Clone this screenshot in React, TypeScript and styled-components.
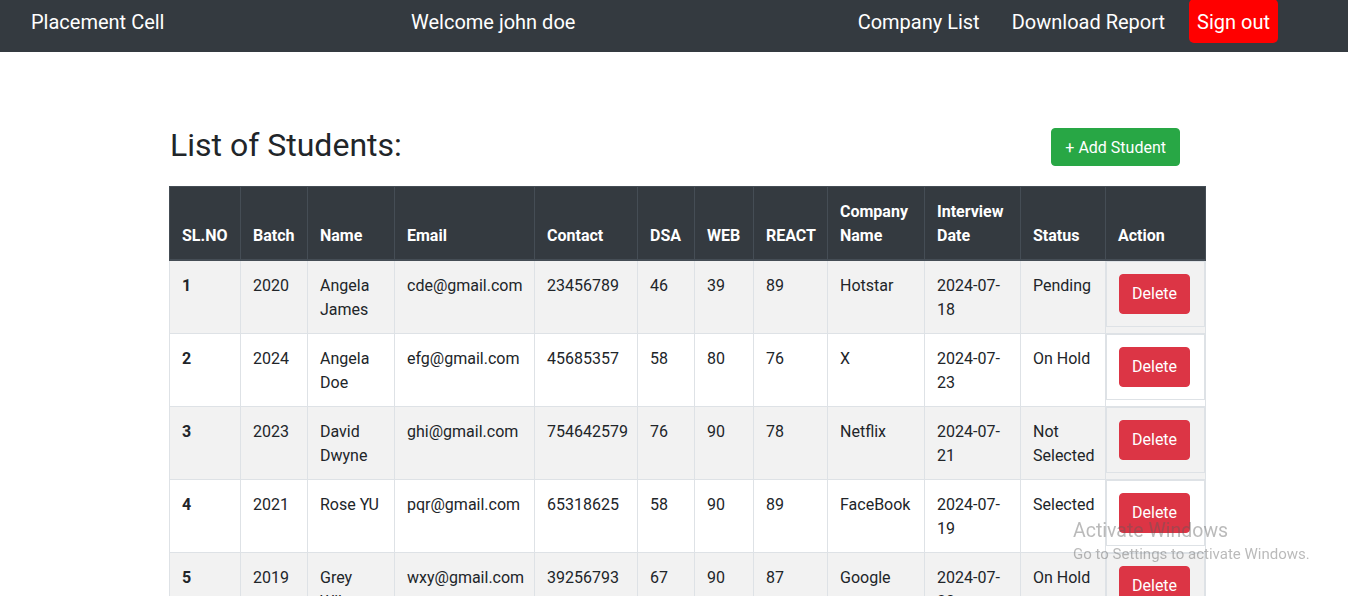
import React from "react";
import styled, { createGlobalStyle } from "styled-components";

const GlobalStyle = createGlobalStyle`
  html, body { margin: 0; padding: 0; overflow: hidden; }
  body {
    font-family: Roboto, "Liberation Sans", sans-serif;
    font-size: 16px;
    line-height: 1.5;
    color: #212529;
    background: #fff;
  }
  * { box-sizing: border-box; }
`;

const NavBar = styled.nav`
  height: 52px;
  background: #343a40;
  display: flex;
  align-items: flex-start;
  padding: 7px 70px 0 31px;
`;

const Brand = styled.div`
  width: 380px;
  font-size: 20px;
  line-height: 30px;
  color: #fff;
`;

const Welcome = styled.div`
  font-size: 20px;
  line-height: 30px;
  color: #fff;
`;

const NavLinks = styled.div`
  margin-left: auto;
  display: flex;
  align-items: flex-start;
`;

const NavLink = styled.a`
  font-size: 20px;
  line-height: 30px;
  color: #fff;
  padding: 0 16px;
  text-decoration: none;
`;

const SignOut = styled.button`
  margin: -8px 0 0 8px;
  padding: 8px 8px 6px;
  font-family: inherit;
  font-size: 20px;
  line-height: 30px;
  color: #fff;
  background: #ff0000;
  border: none;
  border-radius: 5px;
`;

const Main = styled.main`
  width: 1036px;
  margin: 74px 0 0 169px;
`;

const TitleRow = styled.div`
  display: flex;
  justify-content: space-between;
  align-items: flex-start;
  padding: 0 25px 0 1px;
  margin-bottom: 20px;
`;

const Title = styled.h2`
  margin: 0;
  font-size: 32px;
  font-weight: 400;
  line-height: 1.2;
`;

const Button = styled.button<{ $variant: "success" | "danger" }>`
  font-family: inherit;
  font-size: 16px;
  line-height: 24px;
  padding: 7px 12px;
  color: #fff;
  border: 1px solid ${(p) => (p.$variant === "success" ? "#28a745" : "#dc3545")};
  background: ${(p) => (p.$variant === "success" ? "#28a745" : "#dc3545")};
  border-radius: 4px;
`;

const AddButton = styled(Button)`
  margin-top: 2px;
  padding: 7px 13px 5px;
`;

const Table = styled.table`
  width: 1036px;
  border-collapse: collapse;
  table-layout: fixed;
`;

const Th = styled.th`
  background: #343a40;
  color: #fff;
  border: 1px solid #454d55;
  border-bottom-width: 2px;
  padding: 13px 12px 11px;
  vertical-align: bottom;
  text-align: left;
  font-weight: 700;
  line-height: 24px;
`;

const Tr = styled.tr`
  &:nth-of-type(odd) {
    background: #f2f2f2;
  }
`;

const Td = styled.td<{ $bold?: boolean }>`
  border: 1px solid #dee2e6;
  padding: 13px 12px 11px;
  vertical-align: top;
  line-height: 24px;
  font-weight: ${(p) => (p.$bold ? 700 : 400)};
`;

const ActionTd = styled.td`
  border: 1px solid #dee2e6;
  padding: 0;
  vertical-align: top;
`;

const ActionBox = styled.div`
  border: 1px solid #dee2e6;
  padding: 12px;
`;

const Watermark = styled.div`
  position: fixed;
  left: 1073px;
  top: 518px;
  color: rgba(90, 90, 90, 0.42);
  pointer-events: none;
`;

const WmTitle = styled.div`
  font-size: 19.5px;
  line-height: 26px;
`;

const WmSub = styled.div`
  font-size: 15px;
  line-height: 20px;
`;

const widths = [71, 67, 87, 140, 103, 57, 59, 74, 97, 96, 85, 100];
const headers = [
  "SL.NO",
  "Batch",
  "Name",
  "Email",
  "Contact",
  "DSA",
  "WEB",
  "REACT",
  "Company Name",
  "Interview Date",
  "Status",
  "Action",
];

type Student = {
  batch: string;
  name: string;
  email: string;
  contact: string;
  dsa: number;
  web: number;
  react: number;
  company: string;
  date: string;
  status: string;
};

const students: Student[] = [
  { batch: "2020", name: "Angela James", email: "cde@gmail.com", contact: "23456789", dsa: 46, web: 39, react: 89, company: "Hotstar", date: "2024-07-18", status: "Pending" },
  { batch: "2024", name: "Angela Doe", email: "efg@gmail.com", contact: "45685357", dsa: 58, web: 80, react: 76, company: "X", date: "2024-07-23", status: "On Hold" },
  { batch: "2023", name: "David Dwyne", email: "ghi@gmail.com", contact: "754642579", dsa: 76, web: 90, react: 78, company: "Netflix", date: "2024-07-21", status: "Not Selected" },
  { batch: "2021", name: "Rose YU", email: "pqr@gmail.com", contact: "65318625", dsa: 58, web: 90, react: 89, company: "FaceBook", date: "2024-07-19", status: "Selected" },
  { batch: "2019", name: "Grey Wilson", email: "wxy@gmail.com", contact: "39256793", dsa: 67, web: 90, react: 87, company: "Google", date: "2024-07-20", status: "On Hold" },
];

export default function App() {
  return (
    <>
      <GlobalStyle />
      <NavBar>
        <Brand>Placement Cell</Brand>
        <Welcome>Welcome john doe</Welcome>
        <NavLinks>
          <NavLink>Company List</NavLink>
          <NavLink>Download Report</NavLink>
          <SignOut>Sign out</SignOut>
        </NavLinks>
      </NavBar>
      <Main>
        <TitleRow>
          <Title>List of Students:</Title>
          <AddButton $variant="success">+ Add Student</AddButton>
        </TitleRow>
        <Table>
          <colgroup>
            {widths.map((w, i) => (
              <col key={i} style={{ width: w }} />
            ))}
          </colgroup>
          <thead>
            <tr>
              {headers.map((h) => (
                <Th key={h}>{h}</Th>
              ))}
            </tr>
          </thead>
          <tbody>
            {students.map((s, i) => (
              <Tr key={i}>
                <Td $bold>{i + 1}</Td>
                <Td>{s.batch}</Td>
                <Td>{s.name}</Td>
                <Td>{s.email}</Td>
                <Td>{s.contact}</Td>
                <Td>{s.dsa}</Td>
                <Td>{s.web}</Td>
                <Td>{s.react}</Td>
                <Td>{s.company}</Td>
                <Td>{s.date}</Td>
                <Td>{s.status}</Td>
                <ActionTd>
                  <ActionBox>
                    <Button $variant="danger">Delete</Button>
                  </ActionBox>
                </ActionTd>
              </Tr>
            ))}
          </tbody>
        </Table>
      </Main>
      <Watermark>
        <WmTitle>Activate Windows</WmTitle>
        <WmSub>Go to Settings to activate Windows.</WmSub>
      </Watermark>
    </>
  );
}
